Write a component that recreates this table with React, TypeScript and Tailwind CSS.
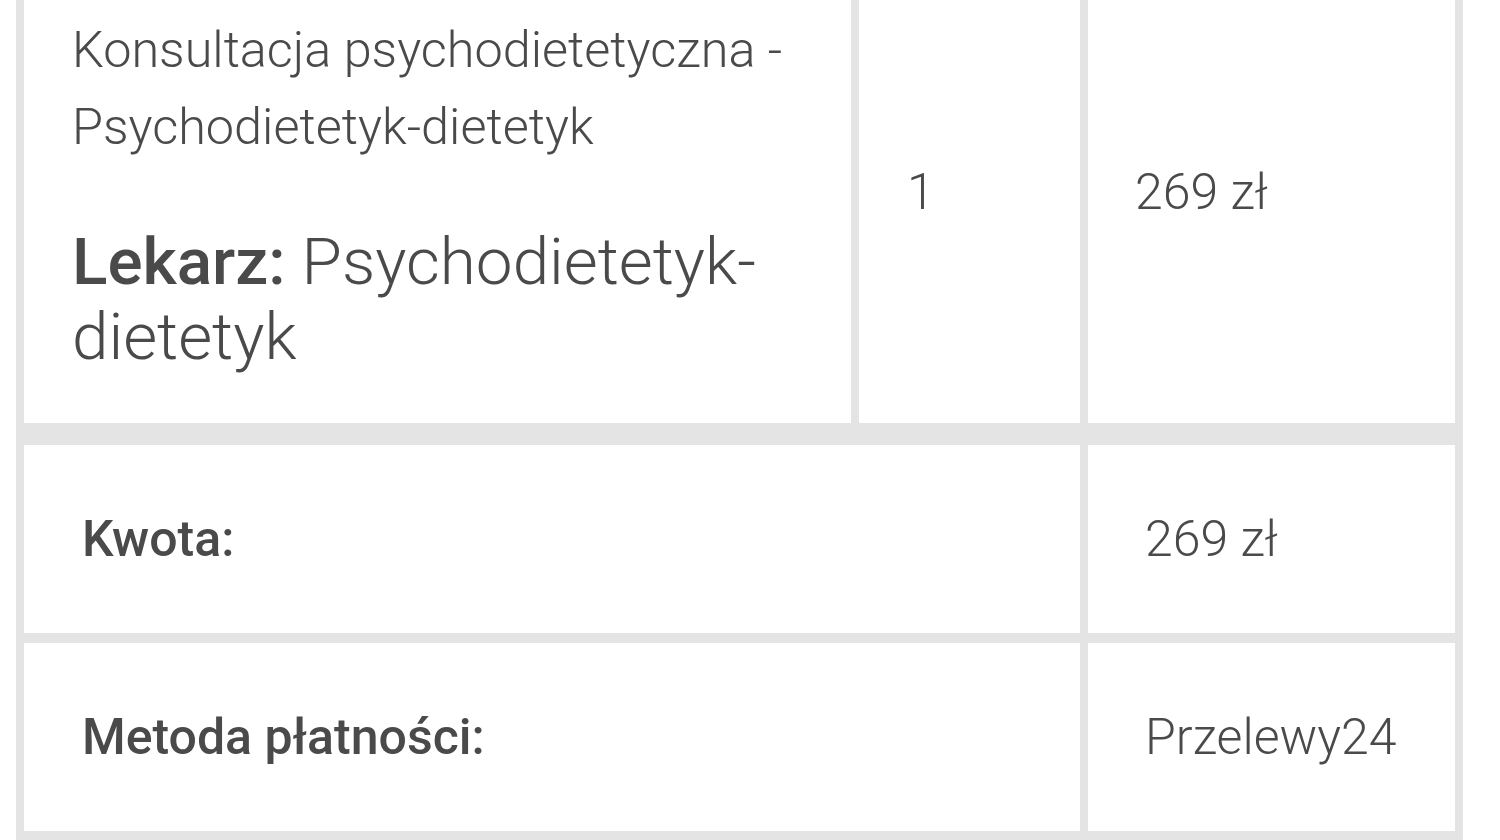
export default function App() {
  return (
    <div className="h-[840px] w-[1500px] overflow-hidden bg-white pl-4 font-['Roboto','Liberation_Sans',sans-serif] text-[#4a4a4a]">
      <div className="w-[1447px] bg-[#e4e4e4] px-2 pb-4">
        {/* Order row */}
        <div className="-mt-[39px] grid grid-cols-[827px_221px_367px] gap-x-2">
          <div className="flex h-[462px] flex-col justify-center bg-white px-[48px]">
            <p className="text-[50.4px] font-light leading-[77px]">
              Konsultacja psychodietetyczna - Psychodietetyk-dietetyk
            </p>
            <p className="mt-[59px] text-[65.6px] font-light leading-[75px]">
              <span className="font-medium">Lekarz:</span> Psychodietetyk-dietetyk
            </p>
          </div>
          <div className="flex h-[462px] items-center bg-white px-[48px]">
            <span className="text-[50px] font-light leading-[77px]">1</span>
          </div>
          <div className="flex h-[462px] items-center bg-white px-[47px]">
            <span className="text-[50px] font-light leading-[77px]">269 zł</span>
          </div>
        </div>

        {/* Summary */}
        <div className="mt-[22px] grid grid-cols-[1056px_367px] gap-x-2 gap-y-[10px]">
          <div className="flex h-[188px] items-center bg-white px-[58px]">
            <span className="text-[50px] font-medium">Kwota:</span>
          </div>
          <div className="flex h-[188px] items-center bg-white px-[57px]">
            <span className="text-[50px] font-light">269 zł</span>
          </div>
          <div className="flex h-[188px] items-center bg-white px-[58px]">
            <span className="text-[50px] font-medium">Metoda płatności:</span>
          </div>
          <div className="flex h-[188px] items-center bg-white px-[57px]">
            <span className="text-[50px] font-light">Przelewy24</span>
          </div>
        </div>
      </div>
    </div>
  );
}
